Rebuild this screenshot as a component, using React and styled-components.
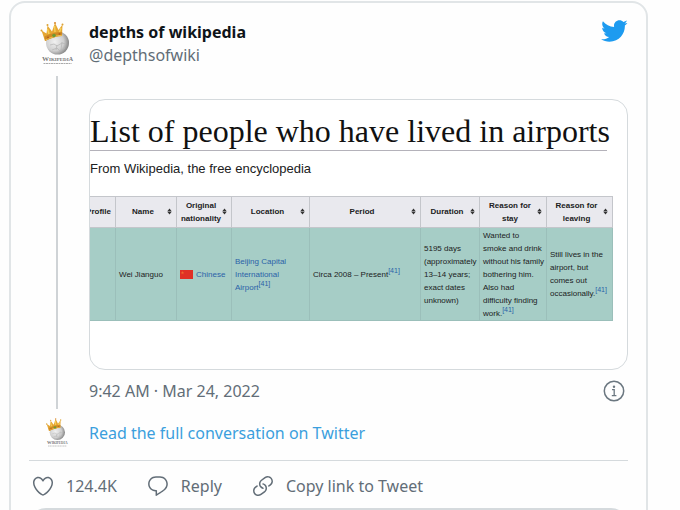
import styled, { createGlobalStyle } from "styled-components";

const GlobalStyle = createGlobalStyle`
  * {
    box-sizing: border-box;
  }

  body {
    margin: 0;
    background: #fefefe;
    font-family: "Noto Sans", "Open Sans", sans-serif;
    font-size: 16px;
    line-height: 23px;
    color: #626d77;
  }

  a {
    color: inherit;
    text-decoration: none;
  }

  svg {
    display: block;
    flex-shrink: 0;
  }
`;

const Page = styled.main`
  height: 100vh;
  overflow: hidden;
  padding: 1px 32px 0 9px;
`;

const Card = styled.article`
  padding: 0 18px 20px;
  border: 2px solid #e1e5e7;
  border-radius: 16px;
  background: #fefefe;
`;

const Columns = styled.div`
  display: grid;
  grid-template-columns: 56px minmax(0, 1fr);
  column-gap: 4px;
  align-items: ${(props) => props.$align || "stretch"};
`;

const Side = styled.div`
  display: flex;
  flex-direction: column;
  align-items: center;
  gap: 8px;
  padding-top: ${(props) => props.$top || 0}px;
`;

const Thread = styled.div`
  flex: 1;
  width: 2px;
  background: #cfd3d6;
`;

const Body = styled.div`
  padding: 18px 0 7px;
`;

const Header = styled.header`
  display: flex;
  justify-content: space-between;
  align-items: flex-start;
`;

const Author = styled.a`
  display: flex;
  flex-direction: column;
`;

const Name = styled.span`
  font-weight: 700;
  color: #0f1419;
`;

const TwitterLink = styled.a`
  && {
    color: #1d9bf0;
  }
  margin-top: -4px;
`;

const Media = styled.div`
  height: 271px;
  margin: 32px 0 10px;
  padding: 12px 14px 0 0;
  overflow: hidden;
  border: 1px solid #d5dadd;
  border-radius: 16px;
  background: #fff;
  font-family: "Liberation Sans", Arial, sans-serif;
  color: #202122;
`;

const Title = styled.h1`
  margin: 0 6px 0 0;
  border-bottom: 1px solid #b4b2ba;
  font-family: "Liberation Serif", Georgia, serif;
  font-size: 32px;
  font-weight: 400;
  line-height: 38px;
  white-space: nowrap;
  color: #111;
`;

const Source = styled.p`
  margin: 8px 0 18px;
  font-size: 13px;
  line-height: 19px;
`;

const Table = styled.table`
  width: calc(100% + 8px);
  margin-left: -8px;
  table-layout: fixed;
  border-collapse: collapse;
  font-size: 8px;
  line-height: 13px;

  & th,
  & td {
    border: 1px solid #c4c6cb;
  }

  & th {
    height: 31px;
    padding: 1px 4px 2px 3px;
    background: #e9e9ee;
  }

  & td {
    height: 93px;
    padding: 0 0 0 3px;
    background: #a6cdc6;
    border-color: #9bbfba;
    white-space: nowrap;
  }

  & a {
    color: #2b62a8;
  }

  & sup {
    font-size: 7px;
    line-height: 0;
  }
`;

const HeadCell = styled.div`
  display: flex;
  align-items: center;

  & span {
    flex: 1;
  }
`;

const Nationality = styled.div`
  display: flex;
  align-items: center;
  gap: 3px;
`;

const TimeRow = styled.div`
  display: flex;
  justify-content: space-between;
  align-items: center;
  height: 22px;
`;

const InfoLink = styled.a`
  padding-right: 3px;
`;

const Conversation = styled.a`
  && {
    color: #3b9fdd;
  }
`;

const Actions = styled.div`
  display: flex;
  align-items: center;
  gap: 29px;
  height: 48px;
  margin-top: 3px;
  padding: 3px 0 0 2px;
  border-top: 1px solid #d5dadd;
`;

const Action = styled.button`
  display: flex;
  align-items: center;
  gap: 11px;
  padding: 0;
  border: none;
  background: none;
  font: inherit;
  color: inherit;
  cursor: pointer;
`;

const MoreButton = styled.button`
  display: block;
  width: 100%;
  height: 34px;
  border: 2px solid #d5dadd;
  border-radius: 17px;
  background: none;
`;

const HEART =
  "M12 21.638h-.014C9.403 21.59 1.95 14.856 1.95 8.478c0-3.064 2.525-5.754 5.403-5.754 2.29 0 3.83 1.58 4.646 2.73.814-1.148 2.354-2.73 4.645-2.73 2.88 0 5.404 2.69 5.404 5.755 0 6.376-7.454 13.11-10.037 13.157H12zM7.354 4.225c-2.08 0-3.903 1.988-3.903 4.255 0 5.74 7.034 11.596 8.55 11.658 1.518-.062 8.55-5.917 8.55-11.658 0-2.267-1.823-4.255-3.903-4.255-2.528 0-3.94 2.936-3.952 2.965-.23.562-1.156.562-1.387 0-.014-.03-1.425-2.965-3.954-2.965z";
const REPLY =
  "M14.046 2.242l-4.148-.01h-.002c-4.374 0-7.8 3.427-7.8 7.802 0 4.098 3.186 7.206 7.465 7.37v3.828c0 .108.044.286.12.403.142.225.384.347.632.347.138 0 .277-.038.402-.118.264-.168 6.473-4.14 8.088-5.506 1.902-1.61 3.04-3.97 3.043-6.312v-.017c-.006-4.367-3.43-7.787-7.8-7.788zm3.787 12.972c-1.134.96-4.862 3.405-6.772 4.643V16.67c0-.414-.335-.75-.75-.75h-.396c-3.66 0-6.318-2.476-6.318-5.886 0-3.534 2.768-6.302 6.3-6.302l4.147.01h.002c3.532 0 6.3 2.766 6.302 6.296-.003 1.91-.942 3.844-2.514 5.176z";
const LINK =
  "M11.96 14.945c-.067 0-.136-.01-.203-.027-1.13-.318-2.097-.986-2.795-1.932-.832-1.125-1.176-2.508-.968-3.893s.942-2.605 2.068-3.438l3.53-2.608c2.322-1.716 5.61-1.224 7.33 1.1.83 1.127 1.175 2.51.967 3.895s-.943 2.605-2.07 3.438l-1.48 1.094c-.333.246-.804.175-1.05-.158-.246-.334-.176-.804.158-1.05l1.48-1.095c.803-.592 1.327-1.463 1.476-2.45.148-.988-.098-1.975-.69-2.778-1.225-1.656-3.572-2.01-5.23-.784l-3.53 2.608c-.802.593-1.326 1.464-1.475 2.45-.15.99.097 1.975.69 2.778.498.675 1.187 1.15 1.992 1.377.4.114.633.528.52.928-.092.33-.394.547-.722.547zM7.27 22.054c-1.61 0-3.197-.735-4.225-2.125-.832-1.127-1.176-2.51-.968-3.894s.943-2.605 2.07-3.438l1.478-1.094c.334-.245.805-.175 1.05.158s.177.804-.157 1.05l-1.48 1.095c-.803.593-1.326 1.464-1.475 2.45-.148.99.097 1.975.69 2.778 1.225 1.657 3.57 2.01 5.23.785l3.528-2.608c1.658-1.225 2.01-3.57.785-5.23-.498-.674-1.187-1.15-1.992-1.376-.4-.113-.633-.527-.52-.927.112-.4.528-.63.926-.522 1.13.318 2.096.986 2.794 1.932 1.717 2.324 1.224 5.612-1.1 7.33l-3.53 2.608c-.933.693-2.023 1.026-3.105 1.026z";
const BIRD =
  "M23.643 4.937c-.835.37-1.732.62-2.675.733.962-.576 1.7-1.49 2.048-2.578-.9.534-1.897.922-2.958 1.13-.85-.904-2.06-1.47-3.4-1.47-2.572 0-4.658 2.086-4.658 4.66 0 .364.042.718.12 1.06-3.873-.195-7.304-2.05-9.602-4.868-.4.69-.63 1.49-.63 2.342 0 1.616.823 3.043 2.072 3.878-.764-.025-1.482-.234-2.11-.583v.06c0 2.257 1.605 4.14 3.737 4.568-.392.106-.803.162-1.227.162-.3 0-.593-.028-.877-.082.593 1.85 2.313 3.198 4.352 3.234-1.595 1.25-3.604 1.995-5.786 1.995-.376 0-.747-.022-1.112-.065 2.062 1.323 4.51 2.093 7.14 2.093 8.57 0 13.255-7.098 13.255-13.254 0-.2-.005-.402-.014-.602.91-.658 1.7-1.477 2.323-2.41z";

const Icon = ({ d, size = 24 }) => (
  <svg width={size} height={size} viewBox="0 0 24 24" fill="currentColor">
    <path d={d} />
  </svg>
);

// puzzle globe wearing a crown
const Avatar = ({ size }) => (
  <svg width={size} height={size} viewBox="0 0 48 48" role="img" aria-label="depths of wikipedia">
    <defs>
      <radialGradient id={`globe${size}`} cx="38%" cy="45%" r="65%">
        <stop offset="0" stopColor="#f1f1f1" />
        <stop offset="0.6" stopColor="#cfcfcf" />
        <stop offset="1" stopColor="#7d7d7d" />
      </radialGradient>
    </defs>
    <circle cx="24.5" cy="23" r="11.5" fill={`url(#globe${size})`} />
    <path
      d="M17 25l4-1 3 2 5-3 4 1M19 30l5-2 3 3 5-3M24 25l-1 5M29 22l-1 8"
      fill="none"
      stroke="#b5b5b5"
      strokeWidth="0.7"
    />
    <path
      d="M12 21L8.500 10.500l5 3L14.500 5.500l4.500 6L22 3l3.500 7L29.500 4.500 29 16c-5 0-11 2-17 5z"
      fill="#e5a632"
    />
    <path d="M11.500 16.500C17 13.500 23 12 29 12v4c-6 0-11.500 2-17 5z" fill="#cf8a24" />
    <path d="M14.500 9l1.500 5M21.500 6l.5 6M28 8l-1.500 4" stroke="#f6cf57" strokeWidth="1.500" />
    <path d="M12.500 20C17 17.500 23 15.500 29 15.300" fill="none" stroke="#efc04a" strokeWidth="1" />
    <circle cx="8.500" cy="10.500" r="1" fill="#dca233" />
    <circle cx="14.500" cy="5" r="1" fill="#dca233" />
    <circle cx="22" cy="3" r="1.100" fill="#d98d35" />
    <circle cx="29.500" cy="4.500" r="1" fill="#dca233" />
    <circle cx="21" cy="15.500" r="1.800" fill="#6b9a35" />
    <circle cx="15" cy="17.500" r="1" fill="#b9601d" />
    <circle cx="26.500" cy="14" r="1" fill="#b9601d" />
    <text
      x="24.500"
      y="41"
      fontFamily="Liberation Serif, serif"
      textAnchor="middle"
      fontWeight="700"
      fill="#777"
    >
      <tspan fontSize="7">W</tspan>
      <tspan fontSize="5">IKIPEDI</tspan>
      <tspan fontSize="6">A</tspan>
    </text>
    <path d="M10.500 43.500h28" stroke="#aaa" strokeWidth="1" strokeDasharray="2 0.500" />
  </svg>
);

const InfoIcon = () => (
  <svg width="22" height="22" viewBox="0 0 22 22" fill="none">
    <circle cx="11" cy="11" r="9.700" stroke="#6b7780" strokeWidth="1.500" />
    <circle cx="11" cy="6.700" r="1.200" fill="#6b7780" />
    <path d="M9 9.700h2.200v5.800M8.800 15.700h4.600" stroke="#6b7780" strokeWidth="1.300" />
  </svg>
);

const SortIcon = () => (
  <svg width="5" height="7" viewBox="0 0 5 7" fill="#333">
    <path d="M2.500 0.500L4.700 3.200H0.300zM2.500 6.500L4.700 3.700H0.300z" />
  </svg>
);

const Flag = () => (
  <svg width="13" height="9" viewBox="0 0 13 9">
    <path d="M0 0h13v9H0z" fill="#e03126" />
    <path d="M2.500 1l.5 1.200h1.200l-1 .8.400 1.200-1.100-.7-1.100.7.400-1.200-1-.8H2z" fill="#ee6a2c" />
  </svg>
);

const Cite = () => (
  <sup>
    <a href="#cite-41">[41]</a>
  </sup>
);

const columns = [
  { label: "Profile", width: 33, plain: true },
  { label: "Name", width: 61 },
  { label: "Original nationality", width: 55 },
  { label: "Location", width: 78 },
  { label: "Period", width: 111 },
  { label: "Duration", width: 59 },
  { label: "Reason for stay", width: 67 },
  { label: "Reason for leaving", width: 66 },
];

const PeopleTable = () => (
  <Table>
    <colgroup>
      {columns.map((col) => (
        <col key={col.label} width={col.width} />
      ))}
    </colgroup>
    <thead>
      <tr>
        {columns.map((col) => (
          <th key={col.label}>
            <HeadCell>
              <span>{col.label}</span>
              {!col.plain && <SortIcon />}
            </HeadCell>
          </th>
        ))}
      </tr>
    </thead>
    <tbody>
      <tr>
        <td></td>
        <td>Wei Jianguo</td>
        <td>
          <Nationality>
            <Flag />
            <a href="#chinese">Chinese</a>
          </Nationality>
        </td>
        <td>
          <a href="#airport">
            Beijing Capital
            <br />
            International
            <br />
            Airport
          </a>
          <Cite />
        </td>
        <td>
          Circa 2008 – Present
          <Cite />
        </td>
        <td>
          5195 days
          <br />
          (approximately
          <br />
          13–14 years;
          <br />
          exact dates
          <br />
          unknown)
        </td>
        <td>
          Wanted to
          <br />
          smoke and drink
          <br />
          without his family
          <br />
          bothering him.
          <br />
          Also had
          <br />
          difficulty finding
          <br />
          work.
          <Cite />
        </td>
        <td>
          Still lives in the
          <br />
          airport, but
          <br />
          comes out
          <br />
          occasionally.
          <Cite />
        </td>
      </tr>
    </tbody>
  </Table>
);

const App = () => {
  return (
    <Page>
      <GlobalStyle />
      <Card>
        <Columns>
          <Side $top={17}>
            <Avatar size={48} />
            <Thread />
          </Side>
          <Body>
            <Header>
              <Author href="#depthsofwiki">
                <Name>depths of wikipedia</Name>
                <span>@depthsofwiki</span>
              </Author>
              <TwitterLink href="#twitter" aria-label="Twitter">
                <Icon d={BIRD} size={28} />
              </TwitterLink>
            </Header>
            <Media>
              <Title>List of people who have lived in airports</Title>
              <Source>From Wikipedia, the free encyclopedia</Source>
              <PeopleTable />
            </Media>
            <TimeRow>
              <a href="#status">9:42 AM · Mar 24, 2022</a>
              <InfoLink href="#info" aria-label="Info">
                <InfoIcon />
              </InfoLink>
            </TimeRow>
          </Body>
        </Columns>
        <Columns $align="center">
          <Side $top={8}>
            <Avatar size={32} />
            <div />
          </Side>
          <Conversation href="#conversation">Read the full conversation on Twitter</Conversation>
        </Columns>
        <Actions>
          <Action>
            <Icon d={HEART} />
            124.4K
          </Action>
          <Action>
            <Icon d={REPLY} />
            Reply
          </Action>
          <Action>
            <Icon d={LINK} />
            Copy link to Tweet
          </Action>
        </Actions>
        <MoreButton aria-label="Read more" />
      </Card>
    </Page>
  );
};
export default App;
